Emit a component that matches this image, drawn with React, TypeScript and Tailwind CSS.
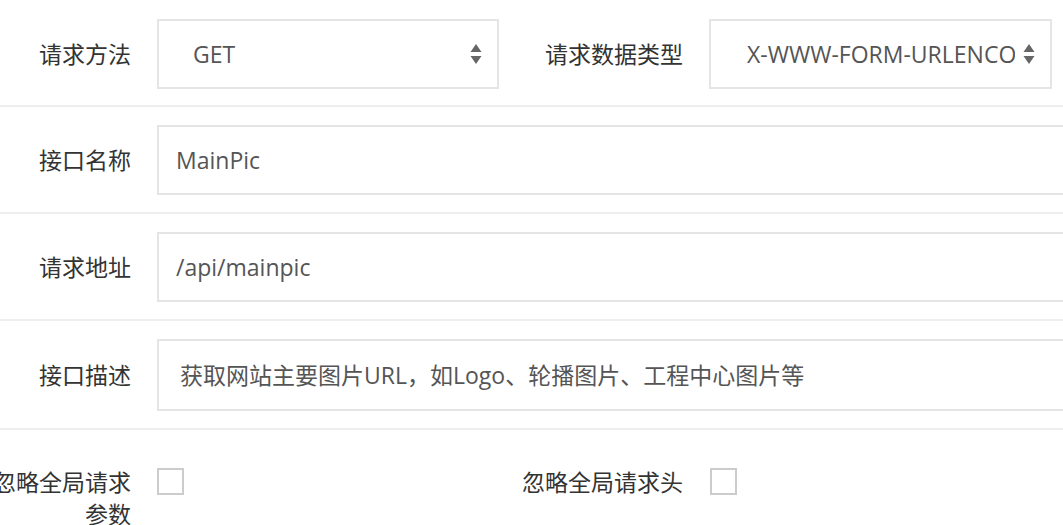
import React from "react";

const font = { fontFamily: '"Open Sans", "Noto Sans CJK SC", sans-serif' };

function Arrows() {
  return (
    <svg width="12" height="21" viewBox="0 0 12 21" className="shrink-0">
      <polygon points="6,0 11.5,8 0.5,8" fill="#666" />
      <polygon points="0.5,12 11.5,12 6,20" fill="#666" />
    </svg>
  );
}

function Label({ children, w = "w-[131px]" }: { children: React.ReactNode; w?: string }) {
  return (
    <div className={`${w} shrink-0 text-right text-[23px] text-[#333] leading-[32px] whitespace-nowrap`}>
      {children}
    </div>
  );
}

function TextRow({ label, value, tall, pad }: { label: string; value: string; tall?: boolean; pad: string }) {
  return (
    <div className="flex items-center gap-[26px] pt-[18px] pb-[17px] border-b-2 border-[#eeeeee]">
      <Label>{label}</Label>
      <div
        className={`flex-1 ${tall ? "h-[72px]" : "h-[70px]"} ${pad} border-2 border-[#e5e5e5] flex items-center text-[23px] text-[#555] whitespace-nowrap overflow-hidden`}
      >
        {value}
      </div>
    </div>
  );
}

export default function App() {
  return (
    <div className="w-full h-[525px] overflow-hidden bg-white" style={font}>
      <div className="w-[1090px]">
        <div className="flex items-center gap-[26px] pt-[19px] pb-[16px] border-b-2 border-[#eeeeee]">
          <Label>请求方法</Label>
          <div className="w-[342px] h-[70px] shrink-0 border-2 border-[#e5e5e5] flex items-center pl-[34px] pr-[15px] text-[23px] text-[#555]">
            <span className="flex-1">GET</span>
            <Arrows />
          </div>
          <Label w="w-[158px]">请求数据类型</Label>
          <div className="w-[343px] h-[70px] shrink-0 border-2 border-[#e5e5e5] flex items-center pl-[36px] pr-[15px] text-[23px] text-[#555]">
            <span className="flex-1 overflow-hidden whitespace-nowrap mr-[8px]">X-WWW-FORM-URLENCODED</span>
            <Arrows />
          </div>
        </div>
        <TextRow label="接口名称" value="MainPic" pad="pl-[17px]" />
        <TextRow label="请求地址" value="/api/mainpic" pad="pl-[17px]" />
        <TextRow label="接口描述" value="获取网站主要图片URL，如Logo、轮播图片、工程中心图片等" tall pad="pl-[21px]" />
        <div className="flex items-start pt-[36px]">
          <div className="w-[131px] shrink-0 flex flex-col items-end text-[23px] text-[#333] leading-[32px]">
            <span className="whitespace-nowrap">忽略全局请求</span>
            <span className="whitespace-nowrap">参数</span>
          </div>
          <div className="ml-[26px] mt-[2px] w-[27px] h-[27px] shrink-0 border-2 border-[#cccccc] bg-white" />
          <div className="w-[499px] shrink-0 text-right text-[23px] text-[#333] leading-[32px] whitespace-nowrap">
            忽略全局请求头
          </div>
          <div className="ml-[27px] mt-[2px] w-[27px] h-[27px] shrink-0 border-2 border-[#cccccc] bg-white" />
        </div>
      </div>
    </div>
  );
}
